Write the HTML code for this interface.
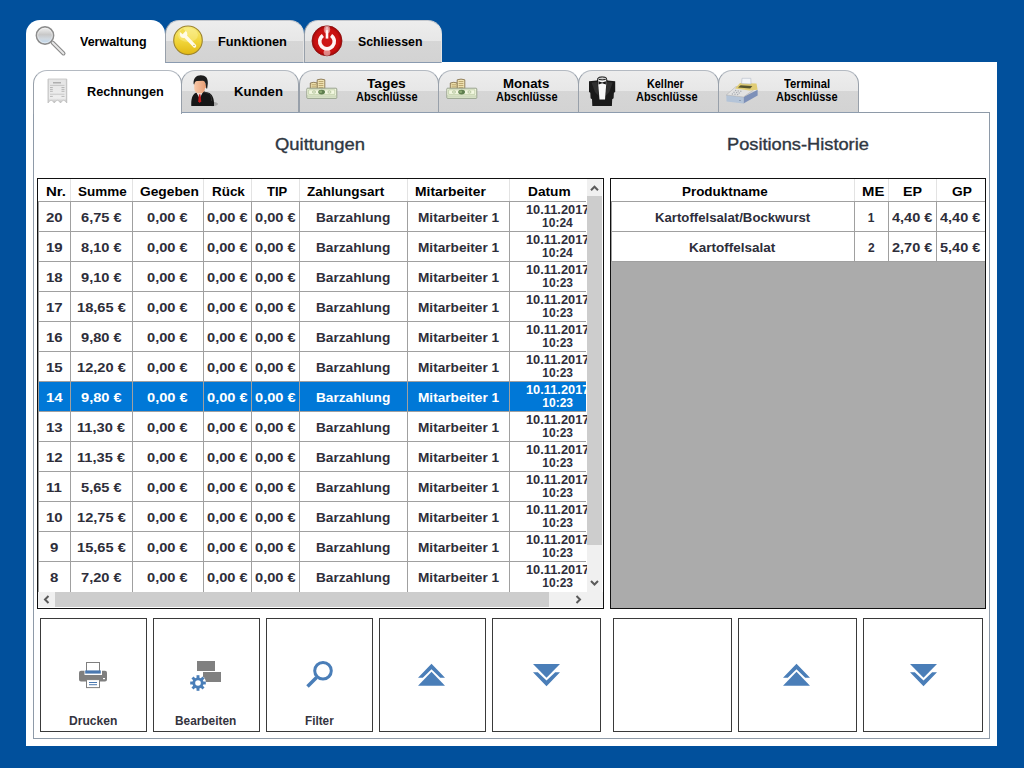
<!DOCTYPE html><html><head><meta charset="utf-8"><style>
*{box-sizing:border-box;margin:0;padding:0}
html,body{width:1024px;height:768px;overflow:hidden;background:#01509c;font-family:"Liberation Sans",sans-serif}
.a{position:absolute}
.x{position:absolute;white-space:nowrap;line-height:20px;transform-origin:0 0;font-weight:bold;font-size:12px;color:#000}
#outer{left:26px;top:62px;width:971px;height:684px;background:#fff}
.ttab{top:20px;height:43px;width:139px;border-radius:14px 14px 0 0;background:linear-gradient(#ededed 0,#e7e7e7 20px,#d6d6d6 20px,#d3d3d3 100%);border:1px solid #98a0aa;border-top-color:#c4c8ce;border-right-color:#e4e4e4;border-bottom:1px solid #8a9bb0}
.ttab.act{background:#fff;border:none;height:44px}
#page{left:33px;top:112px;width:957px;height:627px;border:1px solid #8e9aa8;background:#fff}
.itab{top:70px;height:43px;border-radius:14px 14px 0 0;background:linear-gradient(#ededed 0,#e7e7e7 20px,#d6d6d6 20px,#d3d3d3 100%);border:1px solid #98a0aa;border-top-color:#b4bac2;border-bottom:1px solid #8d9cae}
.itab.act{background:#fff;border-bottom:none;height:44px}
.c{color:#2e2e3a}
.w{color:#fff}
.btn{position:absolute;top:618px;height:114px;border:1px solid #3a3a3a;background:#fff}
</style></head><body>
<div class="a" id="outer"></div>
<div class="a ttab act" style="left:26px"></div>
<div class="a ttab" style="left:165px"></div>
<div class="a ttab" style="left:304px;width:138px"></div>
<div class="x " style="left:80.20px;top:32.00px;font-size:12px;transform:scaleX(1.0396);">Verwaltung</div>
<div class="x " style="left:217.75px;top:32.00px;font-size:12px;transform:scaleX(1.0650);">Funktionen</div>
<div class="x " style="left:358.19px;top:32.00px;font-size:12px;transform:scaleX(1.0276);">Schliessen</div>
<div class="a" id="page"></div>
<div class="a itab act" style="left:33px;width:149px"></div>
<div class="a itab" style="left:181px;width:118px"></div>
<div class="a itab" style="left:299px;width:140px"></div>
<div class="a itab" style="left:438px;width:141px"></div>
<div class="a itab" style="left:578px;width:141px"></div>
<div class="a itab" style="left:718px;width:141px"></div>
<div class="x " style="left:87.05px;top:82.00px;font-size:12px;transform:scaleX(1.0563);">Rechnungen</div>
<div class="x " style="left:233.82px;top:82.00px;font-size:12px;transform:scaleX(1.0951);">Kunden</div>
<div class="x " style="left:367.49px;top:74.00px;font-size:12px;transform:scaleX(1.1446);">Tages</div>
<div class="x " style="left:355.98px;top:87.00px;font-size:12px;transform:scaleX(0.9138);">Abschlüsse</div>
<div class="x " style="left:502.82px;top:74.00px;font-size:12px;transform:scaleX(1.1032);">Monats</div>
<div class="x " style="left:495.98px;top:87.00px;font-size:12px;transform:scaleX(0.9138);">Abschlüsse</div>
<div class="x " style="left:647.28px;top:74.00px;font-size:12px;transform:scaleX(0.9043);">Kellner</div>
<div class="x " style="left:635.98px;top:87.00px;font-size:12px;transform:scaleX(0.9138);">Abschlüsse</div>
<div class="x " style="left:783.61px;top:74.00px;font-size:12px;transform:scaleX(0.9398);">Terminal</div>
<div class="x " style="left:775.98px;top:87.00px;font-size:12px;transform:scaleX(0.9138);">Abschlüsse</div>
<div class="x " style="left:274.89px;top:135.00px;font-size:16px;font-weight:normal;transform:scaleX(1.1501);color:#2f3742;-webkit-text-stroke:0.35px #2f3742">Quittungen</div>
<div class="x " style="left:726.62px;top:135.00px;font-size:16px;font-weight:normal;transform:scaleX(1.1396);color:#2f3742;-webkit-text-stroke:0.35px #2f3742">Positions-Historie</div>
<div class="a" style="left:37px;top:178px;width:567px;height:431px;border:1px solid #111;background:#fff"></div>
<div class="a" style="left:38px;top:381px;width:548px;height:31px;background:#0078d7"></div>
<div class="a" style="left:70px;top:179px;width:1px;height:22px;background:#e3e3e3"></div>
<div class="a" style="left:132px;top:179px;width:1px;height:22px;background:#e3e3e3"></div>
<div class="a" style="left:203px;top:179px;width:1px;height:22px;background:#e3e3e3"></div>
<div class="a" style="left:251px;top:179px;width:1px;height:22px;background:#e3e3e3"></div>
<div class="a" style="left:299px;top:179px;width:1px;height:22px;background:#e3e3e3"></div>
<div class="a" style="left:407px;top:179px;width:1px;height:22px;background:#e3e3e3"></div>
<div class="a" style="left:509px;top:179px;width:1px;height:22px;background:#e3e3e3"></div>
<div class="a" style="left:38px;top:201px;width:548px;height:1px;background:#a0a0a0"></div>
<div class="a" style="left:38px;top:231px;width:548px;height:1px;background:#a0a0a0"></div>
<div class="a" style="left:38px;top:261px;width:548px;height:1px;background:#a0a0a0"></div>
<div class="a" style="left:38px;top:291px;width:548px;height:1px;background:#a0a0a0"></div>
<div class="a" style="left:38px;top:321px;width:548px;height:1px;background:#a0a0a0"></div>
<div class="a" style="left:38px;top:351px;width:548px;height:1px;background:#a0a0a0"></div>
<div class="a" style="left:38px;top:381px;width:548px;height:1px;background:#a0a0a0"></div>
<div class="a" style="left:38px;top:411px;width:548px;height:1px;background:#a0a0a0"></div>
<div class="a" style="left:38px;top:441px;width:548px;height:1px;background:#a0a0a0"></div>
<div class="a" style="left:38px;top:471px;width:548px;height:1px;background:#a0a0a0"></div>
<div class="a" style="left:38px;top:501px;width:548px;height:1px;background:#a0a0a0"></div>
<div class="a" style="left:38px;top:531px;width:548px;height:1px;background:#a0a0a0"></div>
<div class="a" style="left:38px;top:561px;width:548px;height:1px;background:#a0a0a0"></div>
<div class="a" style="left:38px;top:201px;width:1px;height:391px;background:#a0a0a0"></div>
<div class="a" style="left:70px;top:201px;width:1px;height:391px;background:#a0a0a0"></div>
<div class="a" style="left:132px;top:201px;width:1px;height:391px;background:#a0a0a0"></div>
<div class="a" style="left:203px;top:201px;width:1px;height:391px;background:#a0a0a0"></div>
<div class="a" style="left:251px;top:201px;width:1px;height:391px;background:#a0a0a0"></div>
<div class="a" style="left:299px;top:201px;width:1px;height:391px;background:#a0a0a0"></div>
<div class="a" style="left:407px;top:201px;width:1px;height:391px;background:#a0a0a0"></div>
<div class="a" style="left:509px;top:201px;width:1px;height:391px;background:#a0a0a0"></div>
<div class="x " style="left:45.80px;top:182.00px;font-size:12px;transform:scaleX(1.2500);">Nr.</div>
<div class="x " style="left:78.45px;top:182.00px;font-size:12px;transform:scaleX(1.1221);">Summe</div>
<div class="x " style="left:140.23px;top:182.00px;font-size:12px;transform:scaleX(1.1457);">Gegeben</div>
<div class="x " style="left:211.80px;top:182.00px;font-size:12px;transform:scaleX(1.1189);">Rück</div>
<div class="x " style="left:267.09px;top:182.00px;font-size:12px;transform:scaleX(1.0824);">TIP</div>
<div class="x " style="left:306.56px;top:182.00px;font-size:12px;transform:scaleX(1.1252);">Zahlungsart</div>
<div class="x " style="left:414.88px;top:182.00px;font-size:12px;transform:scaleX(1.1540);">Mitarbeiter</div>
<div class="x " style="left:527.89px;top:182.00px;font-size:12px;transform:scaleX(1.1425);">Datum</div>
<div class="x c" style="left:46.19px;top:208.00px;font-size:12px;transform:scaleX(1.2500);">20</div>
<div class="x c" style="left:81.00px;top:208.00px;font-size:12px;transform:scaleX(1.2200);">6,75 €</div>
<div class="x c" style="left:147.44px;top:208.00px;font-size:12px;transform:scaleX(1.2200);">0,00 €</div>
<div class="x c" style="left:206.94px;top:208.00px;font-size:12px;transform:scaleX(1.2200);">0,00 €</div>
<div class="x c" style="left:254.94px;top:208.00px;font-size:12px;transform:scaleX(1.2200);">0,00 €</div>
<div class="x c" style="left:316.38px;top:208.00px;font-size:12px;transform:scaleX(1.1370);">Barzahlung</div>
<div class="x c" style="left:417.62px;top:208.00px;font-size:12px;transform:scaleX(1.1370);">Mitarbeiter 1</div>
<div class="x c" style="left:525.95px;top:200.00px;font-size:12px;transform:scaleX(1.0670);">10.11.2017</div>
<div class="x c" style="left:542.10px;top:213.00px;font-size:12px;">10:24</div>
<div class="x c" style="left:46.00px;top:238.00px;font-size:12px;transform:scaleX(1.2500);">19</div>
<div class="x c" style="left:81.00px;top:238.00px;font-size:12px;transform:scaleX(1.2200);">8,10 €</div>
<div class="x c" style="left:147.44px;top:238.00px;font-size:12px;transform:scaleX(1.2200);">0,00 €</div>
<div class="x c" style="left:206.94px;top:238.00px;font-size:12px;transform:scaleX(1.2200);">0,00 €</div>
<div class="x c" style="left:254.94px;top:238.00px;font-size:12px;transform:scaleX(1.2200);">0,00 €</div>
<div class="x c" style="left:316.38px;top:238.00px;font-size:12px;transform:scaleX(1.1370);">Barzahlung</div>
<div class="x c" style="left:417.62px;top:238.00px;font-size:12px;transform:scaleX(1.1370);">Mitarbeiter 1</div>
<div class="x c" style="left:525.95px;top:230.00px;font-size:12px;transform:scaleX(1.0670);">10.11.2017</div>
<div class="x c" style="left:542.10px;top:243.00px;font-size:12px;">10:24</div>
<div class="x c" style="left:45.94px;top:268.00px;font-size:12px;transform:scaleX(1.2500);">18</div>
<div class="x c" style="left:81.00px;top:268.00px;font-size:12px;transform:scaleX(1.2200);">9,10 €</div>
<div class="x c" style="left:147.44px;top:268.00px;font-size:12px;transform:scaleX(1.2200);">0,00 €</div>
<div class="x c" style="left:206.94px;top:268.00px;font-size:12px;transform:scaleX(1.2200);">0,00 €</div>
<div class="x c" style="left:254.94px;top:268.00px;font-size:12px;transform:scaleX(1.2200);">0,00 €</div>
<div class="x c" style="left:316.38px;top:268.00px;font-size:12px;transform:scaleX(1.1370);">Barzahlung</div>
<div class="x c" style="left:417.62px;top:268.00px;font-size:12px;transform:scaleX(1.1370);">Mitarbeiter 1</div>
<div class="x c" style="left:525.95px;top:260.00px;font-size:12px;transform:scaleX(1.0670);">10.11.2017</div>
<div class="x c" style="left:542.30px;top:273.00px;font-size:12px;">10:23</div>
<div class="x c" style="left:46.00px;top:298.00px;font-size:12px;transform:scaleX(1.2500);">17</div>
<div class="x c" style="left:76.73px;top:298.00px;font-size:12px;transform:scaleX(1.2200);">18,65 €</div>
<div class="x c" style="left:147.44px;top:298.00px;font-size:12px;transform:scaleX(1.2200);">0,00 €</div>
<div class="x c" style="left:206.94px;top:298.00px;font-size:12px;transform:scaleX(1.2200);">0,00 €</div>
<div class="x c" style="left:254.94px;top:298.00px;font-size:12px;transform:scaleX(1.2200);">0,00 €</div>
<div class="x c" style="left:316.38px;top:298.00px;font-size:12px;transform:scaleX(1.1370);">Barzahlung</div>
<div class="x c" style="left:417.62px;top:298.00px;font-size:12px;transform:scaleX(1.1370);">Mitarbeiter 1</div>
<div class="x c" style="left:525.95px;top:290.00px;font-size:12px;transform:scaleX(1.0670);">10.11.2017</div>
<div class="x c" style="left:542.30px;top:303.00px;font-size:12px;">10:23</div>
<div class="x c" style="left:46.00px;top:328.00px;font-size:12px;transform:scaleX(1.2500);">16</div>
<div class="x c" style="left:81.00px;top:328.00px;font-size:12px;transform:scaleX(1.2200);">9,80 €</div>
<div class="x c" style="left:147.44px;top:328.00px;font-size:12px;transform:scaleX(1.2200);">0,00 €</div>
<div class="x c" style="left:206.94px;top:328.00px;font-size:12px;transform:scaleX(1.2200);">0,00 €</div>
<div class="x c" style="left:254.94px;top:328.00px;font-size:12px;transform:scaleX(1.2200);">0,00 €</div>
<div class="x c" style="left:316.38px;top:328.00px;font-size:12px;transform:scaleX(1.1370);">Barzahlung</div>
<div class="x c" style="left:417.62px;top:328.00px;font-size:12px;transform:scaleX(1.1370);">Mitarbeiter 1</div>
<div class="x c" style="left:525.95px;top:320.00px;font-size:12px;transform:scaleX(1.0670);">10.11.2017</div>
<div class="x c" style="left:542.30px;top:333.00px;font-size:12px;">10:23</div>
<div class="x c" style="left:45.94px;top:358.00px;font-size:12px;transform:scaleX(1.2500);">15</div>
<div class="x c" style="left:76.73px;top:358.00px;font-size:12px;transform:scaleX(1.2200);">12,20 €</div>
<div class="x c" style="left:147.44px;top:358.00px;font-size:12px;transform:scaleX(1.2200);">0,00 €</div>
<div class="x c" style="left:206.94px;top:358.00px;font-size:12px;transform:scaleX(1.2200);">0,00 €</div>
<div class="x c" style="left:254.94px;top:358.00px;font-size:12px;transform:scaleX(1.2200);">0,00 €</div>
<div class="x c" style="left:316.38px;top:358.00px;font-size:12px;transform:scaleX(1.1370);">Barzahlung</div>
<div class="x c" style="left:417.62px;top:358.00px;font-size:12px;transform:scaleX(1.1370);">Mitarbeiter 1</div>
<div class="x c" style="left:525.95px;top:350.00px;font-size:12px;transform:scaleX(1.0670);">10.11.2017</div>
<div class="x c" style="left:542.30px;top:363.00px;font-size:12px;">10:23</div>
<div class="x w" style="left:45.75px;top:388.00px;font-size:12px;transform:scaleX(1.2500);">14</div>
<div class="x w" style="left:81.00px;top:388.00px;font-size:12px;transform:scaleX(1.2200);">9,80 €</div>
<div class="x w" style="left:147.44px;top:388.00px;font-size:12px;transform:scaleX(1.2200);">0,00 €</div>
<div class="x w" style="left:206.94px;top:388.00px;font-size:12px;transform:scaleX(1.2200);">0,00 €</div>
<div class="x w" style="left:254.94px;top:388.00px;font-size:12px;transform:scaleX(1.2200);">0,00 €</div>
<div class="x w" style="left:316.38px;top:388.00px;font-size:12px;transform:scaleX(1.1370);">Barzahlung</div>
<div class="x w" style="left:417.62px;top:388.00px;font-size:12px;transform:scaleX(1.1370);">Mitarbeiter 1</div>
<div class="x w" style="left:525.95px;top:380.00px;font-size:12px;transform:scaleX(1.0670);">10.11.2017</div>
<div class="x w" style="left:542.30px;top:393.00px;font-size:12px;">10:23</div>
<div class="x c" style="left:46.00px;top:418.00px;font-size:12px;transform:scaleX(1.2500);">13</div>
<div class="x c" style="left:77.16px;top:418.00px;font-size:12px;transform:scaleX(1.2200);">11,30 €</div>
<div class="x c" style="left:147.44px;top:418.00px;font-size:12px;transform:scaleX(1.2200);">0,00 €</div>
<div class="x c" style="left:206.94px;top:418.00px;font-size:12px;transform:scaleX(1.2200);">0,00 €</div>
<div class="x c" style="left:254.94px;top:418.00px;font-size:12px;transform:scaleX(1.2200);">0,00 €</div>
<div class="x c" style="left:316.38px;top:418.00px;font-size:12px;transform:scaleX(1.1370);">Barzahlung</div>
<div class="x c" style="left:417.62px;top:418.00px;font-size:12px;transform:scaleX(1.1370);">Mitarbeiter 1</div>
<div class="x c" style="left:525.95px;top:410.00px;font-size:12px;transform:scaleX(1.0670);">10.11.2017</div>
<div class="x c" style="left:542.30px;top:423.00px;font-size:12px;">10:23</div>
<div class="x c" style="left:46.00px;top:448.00px;font-size:12px;transform:scaleX(1.2500);">12</div>
<div class="x c" style="left:77.16px;top:448.00px;font-size:12px;transform:scaleX(1.2200);">11,35 €</div>
<div class="x c" style="left:147.44px;top:448.00px;font-size:12px;transform:scaleX(1.2200);">0,00 €</div>
<div class="x c" style="left:206.94px;top:448.00px;font-size:12px;transform:scaleX(1.2200);">0,00 €</div>
<div class="x c" style="left:254.94px;top:448.00px;font-size:12px;transform:scaleX(1.2200);">0,00 €</div>
<div class="x c" style="left:316.38px;top:448.00px;font-size:12px;transform:scaleX(1.1370);">Barzahlung</div>
<div class="x c" style="left:417.62px;top:448.00px;font-size:12px;transform:scaleX(1.1370);">Mitarbeiter 1</div>
<div class="x c" style="left:525.95px;top:440.00px;font-size:12px;transform:scaleX(1.0670);">10.11.2017</div>
<div class="x c" style="left:542.30px;top:453.00px;font-size:12px;">10:23</div>
<div class="x c" style="left:46.31px;top:478.00px;font-size:12px;transform:scaleX(1.2500);">11</div>
<div class="x c" style="left:81.00px;top:478.00px;font-size:12px;transform:scaleX(1.2200);">5,65 €</div>
<div class="x c" style="left:147.44px;top:478.00px;font-size:12px;transform:scaleX(1.2200);">0,00 €</div>
<div class="x c" style="left:206.94px;top:478.00px;font-size:12px;transform:scaleX(1.2200);">0,00 €</div>
<div class="x c" style="left:254.94px;top:478.00px;font-size:12px;transform:scaleX(1.2200);">0,00 €</div>
<div class="x c" style="left:316.38px;top:478.00px;font-size:12px;transform:scaleX(1.1370);">Barzahlung</div>
<div class="x c" style="left:417.62px;top:478.00px;font-size:12px;transform:scaleX(1.1370);">Mitarbeiter 1</div>
<div class="x c" style="left:525.95px;top:470.00px;font-size:12px;transform:scaleX(1.0670);">10.11.2017</div>
<div class="x c" style="left:542.30px;top:483.00px;font-size:12px;">10:23</div>
<div class="x c" style="left:46.00px;top:508.00px;font-size:12px;transform:scaleX(1.2500);">10</div>
<div class="x c" style="left:76.73px;top:508.00px;font-size:12px;transform:scaleX(1.2200);">12,75 €</div>
<div class="x c" style="left:147.44px;top:508.00px;font-size:12px;transform:scaleX(1.2200);">0,00 €</div>
<div class="x c" style="left:206.94px;top:508.00px;font-size:12px;transform:scaleX(1.2200);">0,00 €</div>
<div class="x c" style="left:254.94px;top:508.00px;font-size:12px;transform:scaleX(1.2200);">0,00 €</div>
<div class="x c" style="left:316.38px;top:508.00px;font-size:12px;transform:scaleX(1.1370);">Barzahlung</div>
<div class="x c" style="left:417.62px;top:508.00px;font-size:12px;transform:scaleX(1.1370);">Mitarbeiter 1</div>
<div class="x c" style="left:525.95px;top:500.00px;font-size:12px;transform:scaleX(1.0670);">10.11.2017</div>
<div class="x c" style="left:542.30px;top:513.00px;font-size:12px;">10:23</div>
<div class="x c" style="left:50.38px;top:538.00px;font-size:12px;transform:scaleX(1.2500);">9</div>
<div class="x c" style="left:76.73px;top:538.00px;font-size:12px;transform:scaleX(1.2200);">15,65 €</div>
<div class="x c" style="left:147.44px;top:538.00px;font-size:12px;transform:scaleX(1.2200);">0,00 €</div>
<div class="x c" style="left:206.94px;top:538.00px;font-size:12px;transform:scaleX(1.2200);">0,00 €</div>
<div class="x c" style="left:254.94px;top:538.00px;font-size:12px;transform:scaleX(1.2200);">0,00 €</div>
<div class="x c" style="left:316.38px;top:538.00px;font-size:12px;transform:scaleX(1.1370);">Barzahlung</div>
<div class="x c" style="left:417.62px;top:538.00px;font-size:12px;transform:scaleX(1.1370);">Mitarbeiter 1</div>
<div class="x c" style="left:525.95px;top:530.00px;font-size:12px;transform:scaleX(1.0670);">10.11.2017</div>
<div class="x c" style="left:542.30px;top:543.00px;font-size:12px;">10:23</div>
<div class="x c" style="left:50.31px;top:568.00px;font-size:12px;transform:scaleX(1.2500);">8</div>
<div class="x c" style="left:80.94px;top:568.00px;font-size:12px;transform:scaleX(1.2200);">7,20 €</div>
<div class="x c" style="left:147.44px;top:568.00px;font-size:12px;transform:scaleX(1.2200);">0,00 €</div>
<div class="x c" style="left:206.94px;top:568.00px;font-size:12px;transform:scaleX(1.2200);">0,00 €</div>
<div class="x c" style="left:254.94px;top:568.00px;font-size:12px;transform:scaleX(1.2200);">0,00 €</div>
<div class="x c" style="left:316.38px;top:568.00px;font-size:12px;transform:scaleX(1.1370);">Barzahlung</div>
<div class="x c" style="left:417.62px;top:568.00px;font-size:12px;transform:scaleX(1.1370);">Mitarbeiter 1</div>
<div class="x c" style="left:525.95px;top:560.00px;font-size:12px;transform:scaleX(1.0670);">10.11.2017</div>
<div class="x c" style="left:542.30px;top:573.00px;font-size:12px;">10:23</div>
<div class="a" style="left:587px;top:179px;width:15px;height:413px;background:#f0f0f0"></div>
<div class="a" style="left:587px;top:196px;width:15px;height:349px;background:#cdcdcd"></div>
<div class="a" style="left:602px;top:179px;width:1px;height:429px;background:#fff"></div>
<div class="a" style="left:38px;top:592px;width:565px;height:15px;background:#f0f0f0"></div>
<div class="a" style="left:55px;top:592px;width:494px;height:15px;background:#cdcdcd"></div>
<div class="a" style="left:38px;top:607px;width:565px;height:1px;background:#fff"></div>
<svg class="a" style="left:0;top:0" width="1024" height="768"><g fill="none" stroke="#5a5a5a" stroke-width="2"><polyline points="591,190.2 594.5,186.7 598,190.2"/><polyline points="591,581 594.5,584.5 598,581"/><polyline points="48.5,596 45,599.5 48.5,603"/><polyline points="576.5,596 580,599.5 576.5,603"/></g></svg>
<div class="a" style="left:610px;top:178px;width:376px;height:431px;border:1px solid #111;background:#ababab"></div>
<div class="a" style="left:611px;top:179px;width:374px;height:82px;background:#fff"></div>
<div class="a" style="left:854px;top:179px;width:1px;height:22px;background:#e3e3e3"></div>
<div class="a" style="left:888px;top:179px;width:1px;height:22px;background:#e3e3e3"></div>
<div class="a" style="left:936px;top:179px;width:1px;height:22px;background:#e3e3e3"></div>
<div class="a" style="left:611px;top:201px;width:374px;height:1px;background:#a0a0a0"></div>
<div class="a" style="left:611px;top:231px;width:374px;height:1px;background:#a0a0a0"></div>
<div class="a" style="left:611px;top:261px;width:374px;height:1px;background:#a0a0a0"></div>
<div class="a" style="left:611px;top:201px;width:1px;height:61px;background:#a0a0a0"></div>
<div class="a" style="left:854px;top:201px;width:1px;height:61px;background:#a0a0a0"></div>
<div class="a" style="left:888px;top:201px;width:1px;height:61px;background:#a0a0a0"></div>
<div class="a" style="left:936px;top:201px;width:1px;height:61px;background:#a0a0a0"></div>
<div class="x " style="left:681.91px;top:182.00px;font-size:12px;transform:scaleX(1.1179);">Produktname</div>
<div class="x " style="left:861.71px;top:182.00px;font-size:12px;transform:scaleX(1.2395);">ME</div>
<div class="x " style="left:903.45px;top:182.00px;font-size:12px;transform:scaleX(1.1892);">EP</div>
<div class="x " style="left:951.93px;top:182.00px;font-size:12px;transform:scaleX(1.1433);">GP</div>
<div class="x c" style="left:654.64px;top:208.00px;font-size:12px;transform:scaleX(1.0980);">Kartoffelsalat/Bockwurst</div>
<div class="x c" style="left:867.70px;top:208.00px;font-size:12px;">1</div>
<div class="x c" style="left:892.01px;top:208.00px;font-size:12px;transform:scaleX(1.2090);">4,40 €</div>
<div class="x c" style="left:939.71px;top:208.00px;font-size:12px;transform:scaleX(1.2090);">4,40 €</div>
<div class="x c" style="left:689.15px;top:238.00px;font-size:12px;transform:scaleX(1.1240);">Kartoffelsalat</div>
<div class="x c" style="left:867.95px;top:238.00px;font-size:12px;">2</div>
<div class="x c" style="left:891.89px;top:238.00px;font-size:12px;transform:scaleX(1.2090);">2,70 €</div>
<div class="x c" style="left:939.59px;top:238.00px;font-size:12px;transform:scaleX(1.2090);">5,40 €</div>
<div class="btn" style="left:40px;width:107px"></div>
<div class="btn" style="left:153px;width:107px"></div>
<div class="btn" style="left:266px;width:107px"></div>
<div class="btn" style="left:379px;width:107px"></div>
<div class="btn" style="left:492px;width:109px"></div>
<div class="btn" style="left:613px;width:119px"></div>
<div class="btn" style="left:738px;width:119px"></div>
<div class="btn" style="left:863px;width:120px"></div>
<div class="x " style="left:68.99px;top:711.00px;font-size:12px;transform:scaleX(1.0065);color:#34343e">Drucken</div>
<div class="x " style="left:175.11px;top:711.00px;font-size:12px;transform:scaleX(0.9868);color:#34343e">Bearbeiten</div>
<div class="x " style="left:305.02px;top:711.00px;font-size:12px;transform:scaleX(0.9789);color:#34343e">Filter</div>

<svg class="a" style="left:0;top:0;z-index:10" width="1024" height="768">
<defs>
 <linearGradient id="glass" x1="0" y1="0" x2="0" y2="1">
  <stop offset="0" stop-color="#f4f4f4"/><stop offset="0.45" stop-color="#c8c8c8"/><stop offset="0.7" stop-color="#d0d8e0"/><stop offset="1" stop-color="#bcd8f0"/>
 </linearGradient>
 <linearGradient id="yel" x1="0" y1="0" x2="0" y2="1">
  <stop offset="0" stop-color="#f7ea7a"/><stop offset="0.55" stop-color="#f0d438"/><stop offset="1" stop-color="#e2b812"/>
 </linearGradient>
 <radialGradient id="red" cx="0.5" cy="0.5" r="0.5">
  <stop offset="0" stop-color="#d01818"/><stop offset="0.8" stop-color="#c81010"/><stop offset="1" stop-color="#a00808"/>
 </radialGradient>
 <linearGradient id="redsh" x1="0" y1="0" x2="1" y2="0">
  <stop offset="0" stop-color="#b00000" stop-opacity="0"/><stop offset="0.5" stop-color="#ffffff" stop-opacity="0.55"/><stop offset="1" stop-color="#b00000" stop-opacity="0"/>
 </linearGradient>
 <linearGradient id="paper" x1="0" y1="0" x2="1" y2="0">
  <stop offset="0" stop-color="#d8d8d8"/><stop offset="0.5" stop-color="#f2f2f2"/><stop offset="1" stop-color="#dcdcdc"/>
 </linearGradient>
 <linearGradient id="face" x1="0" y1="0" x2="1" y2="0">
  <stop offset="0" stop-color="#f8c8a8"/><stop offset="1" stop-color="#e8a078"/>
 </linearGradient>
 <linearGradient id="reg" x1="0" y1="0" x2="0" y2="1">
  <stop offset="0" stop-color="#d8dde4"/><stop offset="1" stop-color="#9aaac0"/>
 </linearGradient>
</defs>

<!-- magnifier (Verwaltung) -->
<line x1="52.5" y1="42.5" x2="63.5" y2="53.5" stroke="#8a8a8a" stroke-width="4" stroke-linecap="round"/>
<line x1="52.5" y1="42.5" x2="63.5" y2="53.5" stroke="#e8e8e8" stroke-width="1.8" stroke-linecap="round"/>
<circle cx="45" cy="35.5" r="8.6" fill="url(#glass)" stroke="#8c8c8c" stroke-width="1.6"/>
<circle cx="45" cy="35.5" r="7.4" fill="none" stroke="#f8f8f8" stroke-width="0.8" opacity="0.7"/>

<!-- wrench coin (Funktionen) -->
<circle cx="188" cy="40.3" r="14.3" fill="url(#yel)" stroke="#9c8430" stroke-width="1.1"/>
<ellipse cx="188" cy="35" rx="10" ry="7" fill="#fff6b0" opacity="0.35"/>
<g fill="#fffbe8">
 <line x1="185.5" y1="36.5" x2="194.6" y2="46" stroke="#fffbe8" stroke-width="3.3" stroke-linecap="round"/>
 <circle cx="183.6" cy="34.2" r="3.7"/>
</g>
<path d="M179.6,31.6 L182.6,34.2 L185.6,31 L182.8,28.6 Z" fill="#f2dc50"/>
<circle cx="194" cy="45.4" r="0.7" fill="#c8b040"/>

<!-- power (Schliessen) -->
<circle cx="327" cy="40.8" r="15" fill="url(#red)" stroke="#8a1010" stroke-width="0.8"/>
<ellipse cx="327" cy="29.5" rx="3.2" ry="4" fill="#ffffff" opacity="0.45"/><ellipse cx="327" cy="52.5" rx="3.4" ry="3.2" fill="#ffffff" opacity="0.5"/><ellipse cx="327" cy="29" rx="1.6" ry="2.6" fill="#ffffff" opacity="0.5"/>
<path d="M322.9,35.4 A7.3,7.3 0 1 0 331.1,35.4" fill="none" stroke="#fff4f4" stroke-width="3.6"/>
<line x1="327" y1="30.2" x2="327" y2="38.6" stroke="#fff4f4" stroke-width="2.6"/>

<!-- receipt (Rechnungen) -->
<linearGradient id="rcpt" x1="0" y1="0" x2="0" y2="1"><stop offset="0" stop-color="#e4e4e4"/><stop offset="0.8" stop-color="#eeeeee"/><stop offset="1" stop-color="#b8b8b8"/></linearGradient>
<path d="M48,79 L66.8,79 L66.8,103 Q63.7,97.6 60.53,103 Q57.4,97.6 54.27,103 Q51.1,97.6 48,103 Z" fill="url(#rcpt)" stroke="#bcbcbc" stroke-width="0.7"/>
<line x1="48.4" y1="79.5" x2="48.4" y2="102" stroke="#c8c8c8" stroke-width="0.8"/>
<line x1="66.4" y1="79.5" x2="66.4" y2="102" stroke="#c0c0c0" stroke-width="0.8"/>
<g stroke="#a0a0a0" stroke-width="0.7">
 <line x1="53" y1="82.8" x2="61" y2="82.8" stroke-width="1.2"/>
 <line x1="50" y1="85.4" x2="64.5" y2="85.4" stroke="#b8b8b8"/>
 <line x1="50" y1="87.5" x2="52.8" y2="87.5"/><line x1="61.5" y1="87.5" x2="64.5" y2="87.5"/>
 <line x1="50" y1="89.4" x2="52.8" y2="89.4"/><line x1="61.5" y1="89.4" x2="64.5" y2="89.4"/>
 <line x1="50" y1="91.3" x2="52.8" y2="91.3"/><line x1="61.5" y1="91.3" x2="64.5" y2="91.3"/>
 <line x1="50" y1="94.2" x2="64.5" y2="94.2" stroke="#b8b8b8"/>
 <line x1="50" y1="96.4" x2="52.8" y2="96.4"/><line x1="61.5" y1="96.4" x2="64.5" y2="96.4"/>
</g>

<!-- person (Kunden) -->
<ellipse cx="212.5" cy="104" rx="5.5" ry="2.2" fill="#000" opacity="0.2"/>
<path d="M191.3,106 C191,99.5 192,95 195.5,93 L199.5,91.3 L204,91.5 L209.5,93 C213,95 214.3,100 214,106 Z" fill="#161616"/>
<path d="M203.5,92 L209,93.5 C211,95 212,98 211.5,101" fill="none" stroke="#3a3a3a" stroke-width="0.8"/>
<path d="M196.3,92.3 L199.6,98.5 L202.8,92.3 Z" fill="#f2f2f2"/>
<path d="M198.9,94.2 L200.5,94.2 L201.2,101.2 L199.7,103 L198.2,101.2 Z" fill="#c41a1a"/>
<path d="M194.2,81 C194.2,78 196.5,76.5 199.8,76.5 C203.2,76.5 205,78.5 205,82 L205,87.5 C205,91.5 202.8,93.6 199.6,93.6 C196.4,93.6 194.2,91.5 194.2,87.5 Z" fill="url(#face)"/>
<ellipse cx="205.4" cy="86" rx="1.5" ry="2" fill="#e8a078"/>
<path d="M193.6,84 C193.2,78.2 196.2,75.3 200.8,75.3 C205.6,75.3 208.2,78.2 207.8,83.5 L207.2,88.5 L206.3,88.5 L205.6,84 C205,81.8 204.2,81 202.8,80.8 L197,81 C195.4,81.3 194.6,82.2 194.3,84.5 Z" fill="#1c1c1c"/>
<!-- money (Tages, Monats) -->
<g id="money">
 <path d="M310.3,88.8 L310.3,83 Q313.8,81.6 317.3,83 L317.3,88.8 Z" fill="#efe2ae" stroke="#7a6640" stroke-width="0.8"/>
 <path d="M317.2,88.8 L317.2,79.8 Q321,78.4 324.8,79.8 L324.8,88.8 Z" fill="#f2e6b6" stroke="#7a6640" stroke-width="0.8"/>
 <g stroke="#a89058" stroke-width="0.8"><line x1="311.6" y1="84.8" x2="316" y2="84.8"/><line x1="311.6" y1="86.9" x2="316" y2="86.9"/>
 <line x1="318.6" y1="81.6" x2="323.4" y2="81.6"/><line x1="318.6" y1="83.6" x2="323.4" y2="83.6"/><line x1="318.6" y1="85.6" x2="323.4" y2="85.6"/><line x1="318.6" y1="87.6" x2="323.4" y2="87.6"/></g>
 <rect x="306.8" y="88.2" width="30" height="10.2" rx="0.8" fill="#dfe8cc" stroke="#8a9680" stroke-width="0.8"/>
 <rect x="307.6" y="89" width="28.4" height="6" fill="#f4f8e2"/>
 <path d="M308.6,89.8 L334.8,89.8 L334.8,94.4 L308.6,94.4 Z" fill="none" stroke="#a8bc90" stroke-width="0.6"/>
 <ellipse cx="321.6" cy="92.1" rx="3.4" ry="2.3" fill="#5e7e4e"/>
 <ellipse cx="320.6" cy="91.8" rx="1.5" ry="1.2" fill="#8aa870"/>
 <ellipse cx="314" cy="92" rx="1.6" ry="1.1" fill="none" stroke="#90a878" stroke-width="0.6"/>
 <ellipse cx="329.4" cy="92" rx="1.6" ry="1.1" fill="none" stroke="#90a878" stroke-width="0.6"/>
 <line x1="307.2" y1="96.2" x2="336.4" y2="96.2" stroke="#c4d0b4" stroke-width="0.8"/>
</g>
<use href="#money" x="140" y="0"/>

<!-- tuxedo (Kellner) -->
<path d="M589,81.3 L596.8,80.6 L598,77.6 L606.4,77.6 L607.6,80.6 L615.2,81.3 L615.2,92 L613.9,92.8 L613.6,98.2 L612.2,99.2 L611.9,105.9 L592.3,105.9 L592,99.2 L590.6,98.2 L590.3,92.8 L589,92 Z" fill="#1a1a1a"/>
<path d="M591.5,82.5 L597.5,82 L598.8,96 L595,92 Z M612.7,82.5 L606.8,82 L605.5,96 L609.3,92 Z" fill="#303030"/>
<path d="M598.2,79 L606.2,79 L606.2,84.5 L605,99.4 L599.5,99.4 L598.2,84.5 Z" fill="#f7f7f7"/>
<path d="M598.5,81.2 L602.2,82.6 L605.9,81.2 L605.9,84.6 L602.2,83.2 L598.5,84.6 Z" fill="#151515"/>
<ellipse cx="602.2" cy="78.4" rx="4.2" ry="1.5" fill="#cfcfcf" stroke="#151515" stroke-width="1"/>
<!-- cash register (Terminal) -->
<path d="M743.5,97 L757.6,89.8 L757.6,95.5 L743.5,103.5 Z" fill="#7d90b8"/>
<path d="M726.3,95 L743.5,97 L743.5,103.5 L726.5,101.5 Z" fill="#b4c4d8"/>
<path d="M726.3,95 L736,86.5 L755,88.8 L743.5,97 Z" fill="#e2e2e2" stroke="#a8a8a8" stroke-width="0.5"/>
<path d="M735,88.5 L740,83 L756.5,83.5 L757.6,89.8 L749.5,90.6 Z" fill="#e0cc74"/>
<path d="M738,87.6 L740.6,85.2 L752.3,85.9 L750.2,88.6 Z" fill="#54532e"/>
<path d="M741.6,83.6 L742,78.3 L750.8,78.3 L751,84 Z" fill="#f2f4f8" stroke="#a8b0bc" stroke-width="0.5"/>
<g fill="#a8acb2"><circle cx="734" cy="92.3" r="0.75"/><circle cx="736.6" cy="92.6" r="0.75"/><circle cx="739.2" cy="92.9" r="0.75"/>
<circle cx="735.6" cy="90.6" r="0.75"/><circle cx="738.2" cy="90.9" r="0.75"/><circle cx="740.8" cy="91.2" r="0.75"/>
<circle cx="732.4" cy="94" r="0.75"/><circle cx="735" cy="94.3" r="0.75"/><circle cx="737.6" cy="94.6" r="0.75"/></g>
<circle cx="740" cy="100.5" r="0.6" fill="#607088"/>

<!-- printer -->
<rect x="86.5" y="662.5" width="13" height="10" fill="#fff" stroke="#7f7f7f" stroke-width="1"/>
<path d="M81,670.8 L84.5,670.8 L84.5,675 L102,675 L102,670.8 L105,670.8 Q107,670.8 107,672.8 L107,679.6 Q107,681.6 105,681.6 L81,681.6 Q79,681.6 79,679.6 L79,672.8 Q79,670.8 81,670.8 Z" fill="#7f7f7f"/>
<rect x="85.2" y="670.4" width="15.6" height="3.2" fill="#4a78b0"/>
<rect x="103" y="678" width="2" height="1.2" fill="#fff"/>
<rect x="86.5" y="679.6" width="13" height="8" fill="#fff" stroke="#7f7f7f" stroke-width="1"/>
<rect x="89" y="682" width="8" height="1" fill="#4a78b0"/>
<rect x="89" y="684.2" width="8" height="1" fill="#4a78b0"/>

<!-- bearbeiten -->
<rect x="197" y="661" width="18" height="10" fill="#808080"/>
<rect x="203" y="672" width="18" height="10" fill="#808080"/>
<circle cx="198" cy="683" r="8" fill="#fff"/>
<g transform="translate(198,683)" fill="#4a7eb8">
 <circle r="5.6"/>
 <rect x="-1.45" y="-7.8" width="2.9" height="15.6"/>
 <rect x="-7.8" y="-1.45" width="15.6" height="2.9"/>
 <rect x="-1.45" y="-7.8" width="2.9" height="15.6" transform="rotate(45)"/>
 <rect x="-7.8" y="-1.45" width="15.6" height="2.9" transform="rotate(45)"/>
 <circle r="2.8" fill="#fff"/>
</g>

<!-- filter magnifier -->
<line x1="316.5" y1="677.5" x2="307.5" y2="686.5" stroke="#4a7eb8" stroke-width="3.6" stroke-linecap="butt"/>
<circle cx="323" cy="670.8" r="8.3" fill="none" stroke="#4a7eb8" stroke-width="3"/>

<!-- up arrows -->
<g id="up" fill="#4a7eb8">
 <path d="M418,677.8 L431.5,663.8 L445,677.8 L440.2,677.8 L431.5,669.3 L422.8,677.8 Z"/>
 <path d="M418,685.8 L431.5,671.8 L445,685.8 Z"/>
</g>
<use href="#up" x="365" y="0"/>
<g id="dn" fill="#4a7eb8">
 <path d="M533,664 L560,664 L546.5,677.8 Z"/>
 <path d="M533,672.2 L537.8,672.2 L546.5,680.6 L555.2,672.2 L560,672.2 L546.5,686.2 Z"/>
</g>
<use href="#dn" x="377" y="0"/>
</svg>

</body></html>
